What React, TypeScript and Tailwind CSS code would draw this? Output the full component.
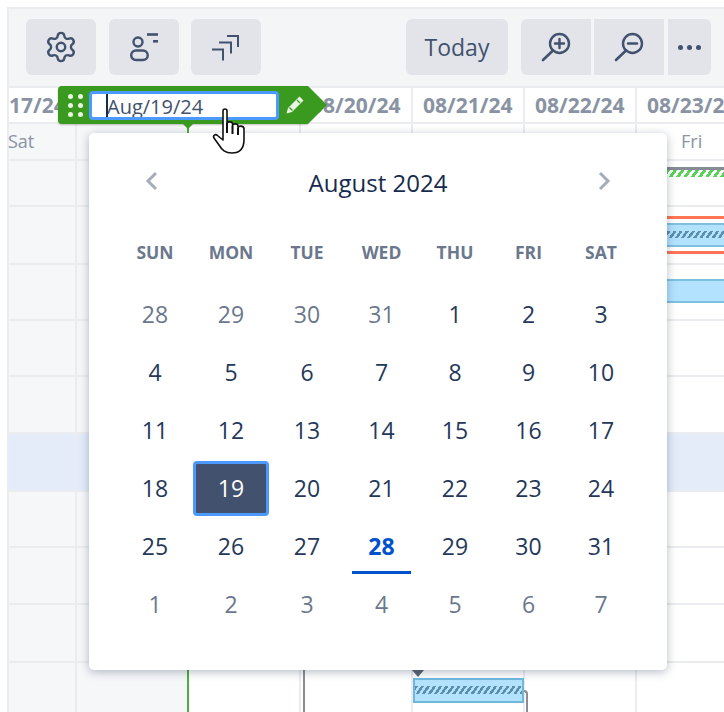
import { Settings } from 'lucide-react';

const font = { fontFamily: '"Open Sans", "Noto Sans", sans-serif' };

const hatch = 'bg-[repeating-linear-gradient(125deg,#5b8fab_0px,#5b8fab_2.500px,transparent_2.500px,transparent_5px)]';

const weeks = [
  [28, 29, 30, 31, 1, 2, 3],
  [4, 5, 6, 7, 8, 9, 10],
  [11, 12, 13, 14, 15, 16, 17],
  [18, 19, 20, 21, 22, 23, 24],
  [25, 26, 27, 28, 29, 30, 31],
  [1, 2, 3, 4, 5, 6, 7],
];

const rowHeights = ['h-[46px]', 'h-[58px]', 'h-[56px]', 'h-[56px]', 'h-[57px]', 'h-[58px]', 'h-[56px]', 'h-[57px]', 'h-[58px]', 'h-[49px]'];

const Cell = ({ width, shaded, children }: { width: string; shaded?: boolean; children?: React.ReactNode }) => (
  <div className={`${width} shrink-0 border-r-2 border-[#ebecf0] ${shaded ? 'bg-[#f6f7f9]' : ''}`}>{children}</div>
);

const ToolButton = ({ className, children }: { className: string; children: React.ReactNode }) => (
  <div className={`h-14 flex items-center justify-center bg-[#e2e4ea] text-[#42526e] ${className}`}>{children}</div>
);

const App = () => {
  return (
    <div style={font} className="relative w-[724px] h-[712px] overflow-hidden bg-white pt-[7px] pl-[7px]">
      <div className="h-[705px] border-t-2 border-l-2 border-[#ebecf0] flex flex-col">
        {/* Toolbar */}
        <div className="h-[77px] shrink-0 bg-[#f4f5f7] flex items-start pt-[10px] pl-[17px]">
          <ToolButton className="w-[70px] rounded-md">
            <Settings size={34} strokeWidth={1.7} />
          </ToolButton>
          <ToolButton className="w-[70px] rounded-md ml-[13px]">
            <svg width="30" height="30" viewBox="0 0 30 30" fill="none" stroke="currentColor" strokeWidth="2.4" strokeLinecap="round">
              <circle cx="9" cy="10" r="4.500" />
              <rect x="2.200" y="18.500" width="16.500" height="9.500" rx="4.700" />
              <path d="M18 2.500h11" strokeWidth="2.600" strokeLinecap="butt" />
              <path d="M24 9.300h5" strokeWidth="2.600" strokeLinecap="butt" />
            </svg>
          </ToolButton>
          <ToolButton className="w-[70px] rounded-md ml-3">
            <svg width="30" height="30" viewBox="0 0 30 30" fill="none" stroke="currentColor" strokeWidth="2">
              <path d="M16 4h11v11" />
              <path d="M8 10.500h12v11" />
              <path d="M1 17.500h11v11" />
            </svg>
          </ToolButton>
          <ToolButton className="w-[102px] rounded-md ml-[145px] text-[23px]">
            Today
          </ToolButton>
          <ToolButton className="w-[70px] rounded-l-md ml-[13px]">
            <svg width="32" height="32" viewBox="0 0 32 32" fill="none" stroke="currentColor" strokeWidth="2.4" strokeLinecap="round">
              <circle cx="19.500" cy="12.500" r="9.500" />
              <path d="M13 19.500L3 29" strokeWidth="2.600" />
              <path d="M15 12.500h9M19.500 8v9" />
            </svg>
          </ToolButton>
          <ToolButton className="w-[70px] ml-[3px]">
            <svg width="32" height="32" viewBox="0 0 32 32" fill="none" stroke="currentColor" strokeWidth="2.4" strokeLinecap="round">
              <circle cx="19.500" cy="12.500" r="9.500" />
              <path d="M13 19.500L3 29" strokeWidth="2.600" />
              <path d="M15 12.500h9" />
            </svg>
          </ToolButton>
          <ToolButton className="w-[43px] rounded-r-md ml-1 gap-[4px]">
            <span className="w-[5px] h-[5px] rounded-full bg-[#42526e]" />
            <span className="w-[5px] h-[5px] rounded-full bg-[#42526e]" />
            <span className="w-[5px] h-[5px] rounded-full bg-[#42526e]" />
          </ToolButton>
        </div>

        {/* Date header */}
        <div className="h-[38px] shrink-0 flex border-y-2 border-[#ebecf0] text-[21px] font-bold text-[#8993a4] leading-[34px] whitespace-nowrap overflow-hidden">
          <Cell width="w-[68px]"><div className="w-full overflow-hidden">17/24</div></Cell>
          <Cell width="w-[112px]" />
          <Cell width="w-[112px]" />
          <Cell width="w-[112px]"><div className="pl-[10px]">08/20/24</div></Cell>
          <Cell width="w-[112px]"><div className="pl-[10px]">08/21/24</div></Cell>
          <Cell width="w-[112px]"><div className="pl-[10px]">08/22/24</div></Cell>
          <Cell width="w-[112px]"><div className="pl-[10px]">08/23/24</div></Cell>
        </div>

        {/* Day names */}
        <div className="h-[37px] shrink-0 flex border-b-2 border-[#ebecf0] text-[18px] text-[#8993a4] leading-[35px]">
          <Cell width="w-[68px]" shaded><span className="-ml-px">Sat</span></Cell>
          <Cell width="w-[112px]" shaded />
          <Cell width="w-[112px]" />
          <Cell width="w-[112px]" />
          <Cell width="w-[112px]" />
          <Cell width="w-[112px]" />
          <Cell width="w-[112px]"><div className="pl-[44px]">Fri</div></Cell>
        </div>

        {/* Gantt rows */}
        {rowHeights.map((height, i) => (
          <div
            key={i}
            className={`${height} shrink-0 flex ${i === 9 ? '' : 'border-b-2 border-[#ebecf0]'} ${i === 5 ? 'bg-[#e4ecf9]' : ''}`}
          >
            <Cell width="w-[68px]" shaded={i !== 5} />
            <Cell width="w-[112px]" shaded={i !== 5} />
            <Cell width="w-[112px]" />
            <Cell width="w-[112px]" />
            <Cell width="w-[112px]">
              {i === 9 && (
                <>
                  <div className="-ml-px mt-[7px] w-0 h-0 border-x-[6px] border-x-transparent border-t-[7px] border-t-[#5e6570]" />
                  <div className="mt-px -mr-px h-[25px] bg-[#b3e2ff] border-2 border-[#6fb8dc] pt-[6px]">
                    <div className={`h-[8px] ${hatch}`} />
                  </div>
                </>
              )}
            </Cell>
            <Cell width="w-[112px]" />
            <Cell width="w-[112px]">
              {i === 0 && (
                <>
                  <div className="mt-[6px] h-[3px] bg-[#878b96]" />
                  <div className="h-[7px] bg-[repeating-linear-gradient(125deg,#57d357_0px,#57d357_3px,transparent_3px,transparent_6px)]" />
                </>
              )}
              {i === 1 && (
                <>
                  <div className="mt-[9px] h-[3px] bg-[#ff7452]" />
                  <div className="mt-1 h-[24px] bg-[#b3e2ff] border-y-2 border-[#7fc0df] pt-[6px]">
                    <div className={`h-[7px] ${hatch}`} />
                  </div>
                  <div className="mt-1 h-[3px] bg-[#ff7452]" />
                </>
              )}
              {i === 2 && <div className="mt-[14px] h-[24px] bg-[#b3e2ff] border-y-2 border-[#7fc0df]" />}
            </Cell>
          </div>
        ))}
      </div>

      {/* Dependency lines */}
      <div className="absolute left-[187px] top-[124px] bottom-0 w-[2px] bg-[#4caf3f]" />
      <div className="absolute left-[303px] top-[160px] bottom-0 w-[2px] bg-[#8a8d94]" />
      <div className="absolute left-[524px] top-[690px] bottom-0 w-[4px] h-[22px] border-t-2 border-r-2 border-[#8a8d94] rounded-tr" />

      {/* Calendar */}
      <div className="absolute left-[89px] top-[133px] w-[578px] h-[537px] bg-white rounded-[5px] shadow-[0_2px_10px_rgba(9,30,66,0.3)] text-[#253858]">
        <div className="h-[90px] flex items-start pt-[35px] pl-[50px] pr-[50px] justify-between">
          <svg width="26" height="26" viewBox="0 0 26 26" fill="none" stroke="#a5adba" strokeWidth="3">
            <path d="M17 5l-8 8 8 8" />
          </svg>
          <div className="text-[24px] leading-[40px] -mt-[5px] font-medium text-[#172b4d]">August 2024</div>
          <svg width="26" height="26" viewBox="0 0 26 26" fill="none" stroke="#a5adba" strokeWidth="3">
            <path d="M9 5l8 8-8 8" />
          </svg>
        </div>
        <div className="pl-[28px]">
          <div className="grid grid-cols-[76px_76px_76px_73px_74px_73px_72px] h-[62px] text-[17.500px] font-bold text-[#6b778c] text-center leading-[58px]">
            {['SUN', 'MON', 'TUE', 'WED', 'THU', 'FRI', 'SAT'].map((d) => (
              <div key={d}>{d}</div>
            ))}
          </div>
          {weeks.map((week, w) => (
            <div key={w} className="grid grid-cols-[76px_76px_76px_73px_74px_73px_72px] h-[58px] text-[23px] text-center">
              {week.map((day, d) => {
                const muted = (w === 0 && d < 4) || w === 5;
                const selected = w === 3 && d === 1;
                const today = w === 4 && d === 3;
                return (
                  <div key={d} className="flex items-center justify-center">
                    {selected ? (
                      <div className="w-full h-[55px] flex items-center justify-center bg-[#42526e] text-white border-[3px] border-[#4c9aff] rounded-[4px]">
                        {day}
                      </div>
                    ) : today ? (
                      <div className="w-[59px] h-[55px] flex items-center justify-center font-bold text-[#0052cc] border-b-[3px] border-[#0052cc] pt-[3px]">
                        {day}
                      </div>
                    ) : (
                      <span className={muted ? 'text-[#6b778c]' : ''}>{day}</span>
                    )}
                  </div>
                );
              })}
            </div>
          ))}
        </div>
      </div>

      {/* Date drag handle */}
      <div className="absolute left-[58px] top-[86px] w-[250px] h-[38px] bg-[#3a9a1f] rounded-l-[4px] shadow-[0_1px_2px_rgba(0,0,0,0.25)] flex items-center pl-[10px]">
        <div className="grid grid-cols-2 gap-x-[5px] gap-y-[4px] w-[15px]">
          {[0, 1, 2, 3, 4, 5].map((i) => (
            <span key={i} className="w-[5px] h-[5px] rounded-full bg-[#e8f5e0]" />
          ))}
        </div>
        <div className="ml-[6px] w-[190px] h-[29px] bg-white border-[3px] border-[#4c9aff] rounded-[4px] overflow-hidden flex text-[#42526e] text-[20px] leading-[24px] pl-[15px] pt-px">
          <div className="relative whitespace-nowrap">
            <span className="absolute -left-px -top-px w-[2px] h-[24px] bg-[#172b4d]" />
            Aug/19/24
          </div>
        </div>
        <svg className="ml-[6px]" width="20" height="20" viewBox="0 0 20 20" fill="#e8f5e0">
          <path d="M14.500 1.500l4 4L7 17l-5.500 1.500L3 13z" />
          <path d="M12 5l3 3" stroke="#3a9a1f" strokeWidth="1.200" />
          <path d="M4.500 12.500l3 3" stroke="#3a9a1f" strokeWidth="1.200" />
        </svg>
        <div className="absolute left-full top-0 w-0 h-0 border-y-[19px] border-y-transparent border-l-[19px] border-l-[#3a9a1f]" />
        <div className="absolute left-[125px] top-full w-0 h-0 border-x-[5px] border-x-transparent border-t-[5px] border-t-[#3a9a1f]" />
      </div>

      {/* Hand cursor */}
      <svg className="absolute left-[211px] top-[106px]" width="38" height="50" viewBox="0 0 38 50" fill="#fff" stroke="#111" strokeWidth="1.600" strokeLinejoin="round">
        <path d="M12 5c0-2.600 4-2.600 4 0v13c0-2.800 5.500-2.800 5.500 0v2c0-2.800 5.500-2.800 5.500 0v2c0-2.600 5.500-2.600 6 .5v11c0 8-3.500 13.500-12 13.500-7 0-10-3-13-8l-5-7c-1.500-2.500 1.500-4.500 3.500-2.500l5.500 4.500z" />
        <path d="M16 17v10M21.500 20v8M27 22v7" strokeWidth="2" />
      </svg>
    </div>
  );
};

export default App;
